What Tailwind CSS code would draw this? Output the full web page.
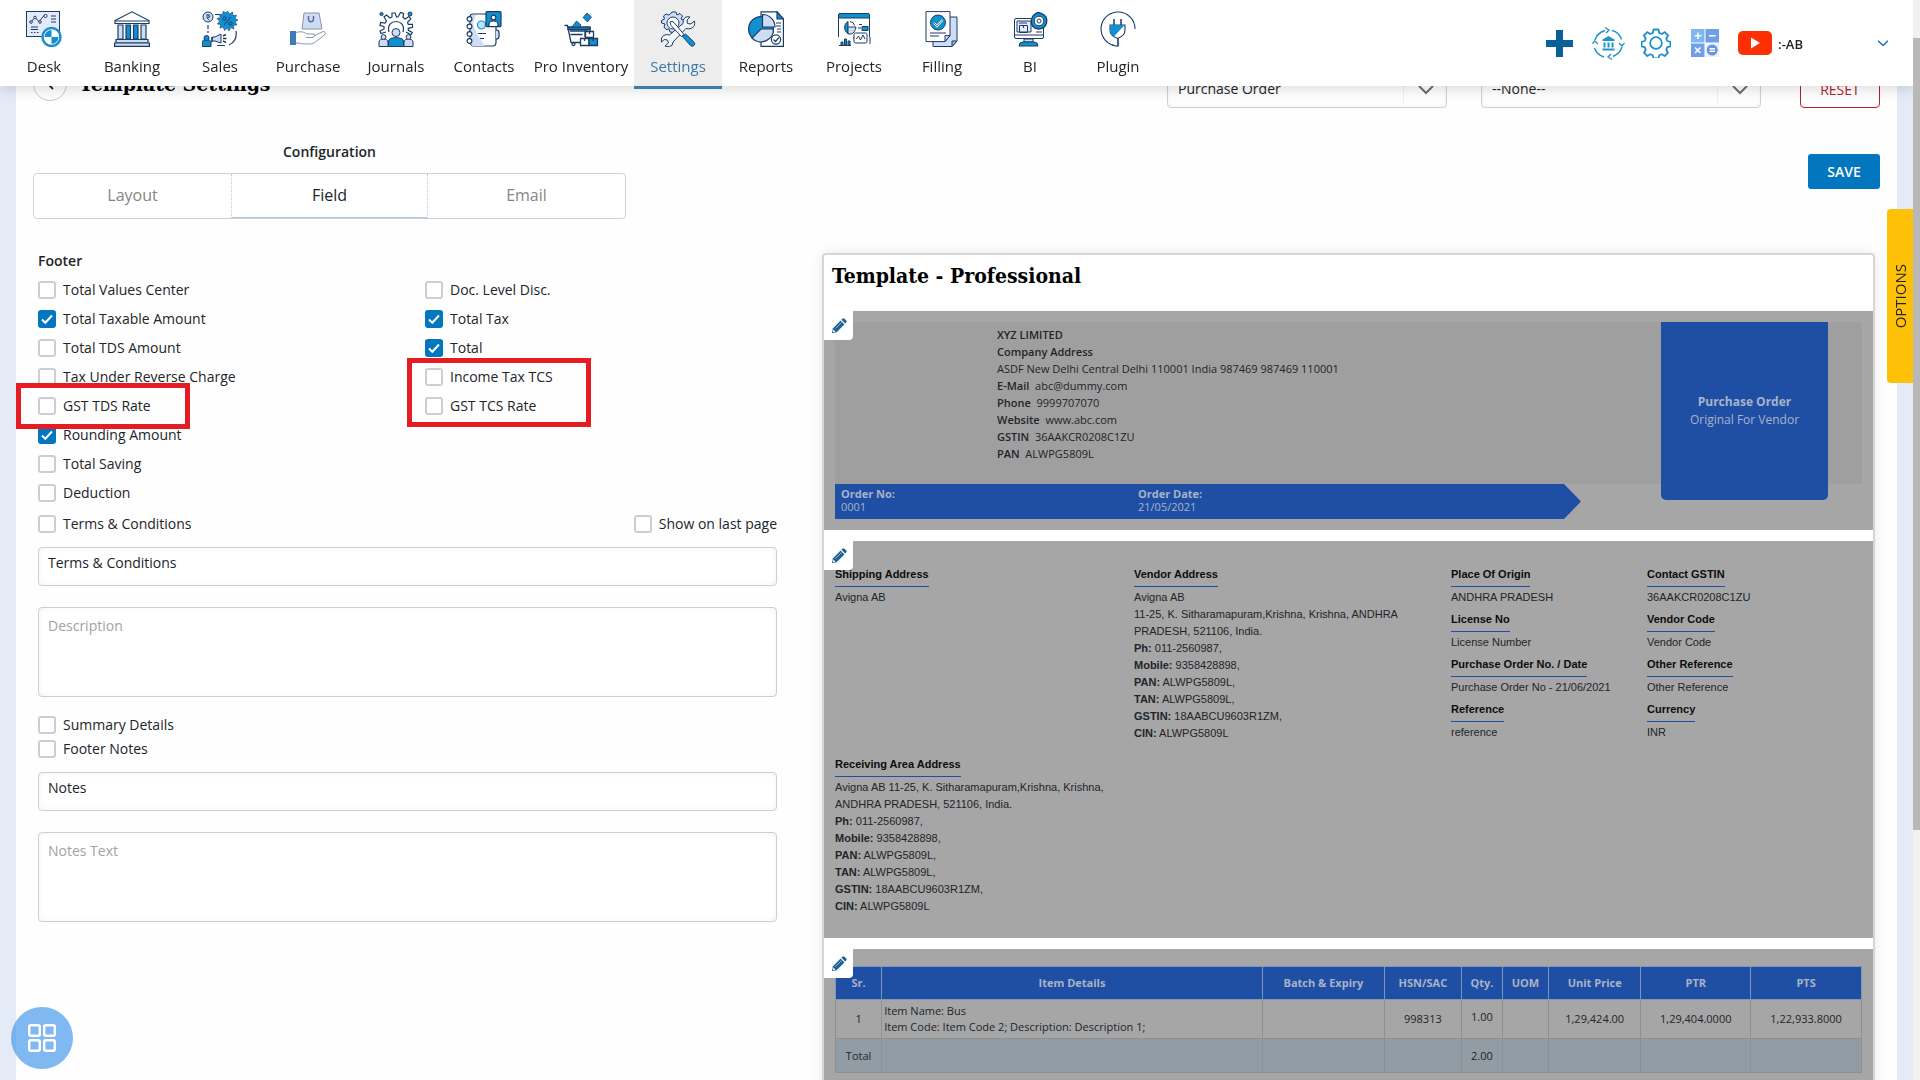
<!DOCTYPE html>
<html lang="en">
<head>
<meta charset="utf-8">
<title>Template Settings</title>
<meta name="viewport" content="width=device-width, initial-scale=1">
<script src="https://cdn.jsdelivr.net/npm/@tailwindcss/browser@4"></script>
</head>
<body class="h-screen overflow-hidden bg-[#e4eaf6] pr-[7px] font-['Open_Sans',sans-serif] text-sm text-[#212529]">

<svg class="hidden" aria-hidden="true">
  <symbol id="tick" viewBox="0 0 18 18"><path d="M4 9.5l3.3 3.2L14 5.5" fill="none" stroke="#fff" stroke-width="2"/></symbol>
  <symbol id="down" viewBox="0 0 16 10"><path d="M1 1l7 7 7-7" fill="none" stroke="currentColor" stroke-width="2"/></symbol>
  <symbol id="pencil" viewBox="0 0 16 16"><path d="M1 15l.8-4.6L9.6 2.6l3.8 3.8-7.8 7.8z" fill="#1f6296"/><path d="M10.4 1.8l1-1a1.5 1.5 0 0 1 2.100 0l1.700 1.700a1.500 1.500 0 0 1 0 2.100l-1 1z" fill="#1f6296"/><path d="M2.300 11.500l2.200 2.200-2 .4-.6-.6z" fill="#fff"/><path d="M4.500 10.500l6-6" stroke="#a9c6dc" stroke-width=".8"/></symbol>
</svg>

<!-- Top navigation -->
<header class="fixed top-0 right-[7px] left-0 z-20 flex h-[86px] items-center justify-between bg-white shadow-[0_2px_14px_rgba(0,0,0,0.16)]">
  <nav class="flex h-full text-center text-[15px] leading-5 font-medium text-[#212529]">
    <a href="#" class="flex w-22 flex-col items-center gap-[9px] pt-[11px]">
      <svg class="size-9" viewBox="0 0 36 36" fill="none" stroke="#1c3c64"><rect x=".5" y=".5" width="33" height="25" fill="#e3eafb"/><path d="M5 11l4-4.500 4 4 6-7M25 5h5M25 8h5M25 11h5M5 16h7M5 18.500h7M5 21.500h1.500M8 21.500h1.500M11 21.500h1.500"/><circle cx="5" cy="11" r="1.300" fill="#fff"/><circle cx="9" cy="6.500" r="1.300" fill="#fff"/><circle cx="14" cy="11" r="1.300" fill="#fff"/><circle cx="19.500" cy="5" r="1.600" fill="#fff"/><circle cx="25.500" cy="26" r="9" fill="#fff" stroke="#1a8fcb" stroke-width="2.500"/><path d="M25.500 19v7h-7a7 7 0 0 1 7-7zM25.500 33v-7h7a7 7 0 0 1-7 7z" fill="#1190d0" stroke="none"/></svg>
      Desk</a>
    <a href="#" class="flex w-22 flex-col items-center gap-[9px] pt-[11px]">
      <svg class="size-9" viewBox="0 0 36 36" fill="none" stroke="#1c3c64" stroke-width="1.200"><path d="M1 9.500L18 .8l17 8.700v3H1z" fill="#fff"/><path d="M1 10h34"/><path d="M4 14h5v14H4zM27 14h5v14h-5z" fill="#cfdcf5"/><path d="M12 14h4.500v14H12zM19.500 14H24v14h-4.500z" fill="#1190d0"/><path d="M2 28.500h32V32H2z" fill="#cfdcf5"/><path d="M.6 32h34.800v3.400H.6z" fill="#cfdcf5"/></svg>
      Banking</a>
    <a href="#" class="flex w-22 flex-col items-center gap-[9px] pt-[11px]">
      <svg class="size-9" viewBox="0 0 36 36" fill="none" stroke="#1c3c64"><circle cx="6" cy="6" r="5" fill="#cfdcf5"/><path d="M4 4h4M4 6h4M5 4c4 0 3 3 0 3l2.500 2.500" stroke-width=".8"/><path d="M13 3.500h4M6 14v4M6 20v2M34 20c1 6-1 11-7 14M23 34.500h-8" stroke-width="1.200"/><path d="M25.500 0l2 3 3-2 .3 3.600 3.700-.4-1.500 3.300 3 1.500-3 2 2 3-3.600.3.600 3.600-3.400-1.300L27 20l-2-3-2.600 2.600-1-3.500-3.500 1 .9-3.500-3.500-.7 2.400-2.700L15 7.500l3.500-.9L17 3.200l3.600.3.600-3.300L24 2z" fill="#1190d0" stroke-width=".6"/><path d="M22 14l7-8"/><circle cx="22.500" cy="7.500" r="1.600"/><circle cx="28.500" cy="12.500" r="1.600"/><path d="M0 35.500V31c0-3 9-3 9 0v4.500z" fill="#1190d0"/><circle cx="4.500" cy="27" r="2.500" fill="#1190d0"/><path d="M10 26h3l6-3v9l-6-2h-3z" fill="#cfdcf5"/><path d="M10 26v5M21 25l3-1.500M21 27.500h3.500M21 30l3 1.500" stroke-width="1.400"/></svg>
      Sales</a>
    <a href="#" class="flex w-22 flex-col items-center gap-[9px] pt-[11px]">
      <svg class="size-9" viewBox="0 0 36 36" fill="none" stroke="#8a93a8"><path d="M14 2h15l3 16H12z" fill="#cfdcf5"/><path d="M18.500 5v3c0 3.500 5 3.500 5 0V5" stroke="#5b6ea5" stroke-width="1.500"/><path d="M0 20h6v14H0z" fill="#3c7cbc" stroke="none"/><path d="M6 21.500c5-1.500 8-.5 11 1.500h6c3 0 2 3.500-1 3.500h-6M24 25l8-4c3-1.300 4.500 1 2.500 3L24 32c-2 1.300-8 1-12 .8-2-.1-3-1-6-.8"/></svg>
      Purchase</a>
    <a href="#" class="flex w-22 flex-col items-center gap-[9px] pt-[11px]">
      <svg class="size-9" viewBox="0 0 36 36" fill="none" stroke="#1c3c64"><circle cx="3.500" cy="3" r="1.600" fill="#1190d0"/><circle cx="32" cy="3" r="2" fill="#1190d0"/><path d="M8 21l-5 1.500-1-2.500 4-2v-2.500l-4-1 .7-3 4.300.5 1.500-2L6 6l2.500-2 3.500 3 2-1V2l3 0 1.500 4h1.500L22.500 1.500l3 1L25 6.500l2 1.500 4-2.500 1.800 2.500-3.300 3.300.8 2 4.200 0v3l-4.200 1v2l4 2.200-1.300 2.200L28 21M11 21c-4-14 18-14 14 0" stroke-width="1.200"/><path d="M1 35.500V31c0-4 9-4 9 0v4.500zM26 35.500V31c0-4 9-4 9 0v4.500z" fill="#cfdcf5"/><circle cx="5.500" cy="26" r="2.400" fill="#cfdcf5"/><circle cx="30.500" cy="26" r="2.400" fill="#cfdcf5"/><path d="M10.500 35.500V30c0-4.500 15-4.500 15 0v5.500z" fill="#1190d0"/><circle cx="18" cy="21.500" r="4" fill="#cfdcf5"/></svg>
      Journals</a>
    <a href="#" class="flex w-22 flex-col items-center gap-[9px] pt-[11px]">
      <svg class="size-9" viewBox="0 0 36 36" fill="none" stroke="#1c3c64" stroke-width="1.200"><path d="M29 3H7q-3 0-3 3v24q0 4 3 5h20q3 0 3-4V3z" fill="#fff"/><path d="M5 4h5l-3 9 4 10 8 12H7q-2 0-2-4z" fill="#cfdcf5" stroke="none"/><circle cx="3.500" cy="8" r="2.400" fill="#fff"/><circle cx="3.500" cy="15.500" r="2.400" fill="#fff"/><circle cx="3.500" cy="23" r="2.400" fill="#fff"/><circle cx="3.500" cy="30" r="2.400" fill="#fff"/><circle cx="15.500" cy="14" r="4" fill="#bfe0fa" stroke="#1190d0"/><path d="M12 22.500h8M14 27.500h4"/><path d="M30 19q3 0 3 2.500v4q0 2.500-3 2.500" fill="#cfdcf5"/><rect x="20" y=".6" width="15" height="15" rx="1" fill="#1190d0"/><circle cx="27.500" cy="6.500" r="2.300" fill="#fff"/><path d="M23 15.500V13c0-4 9-4 9 0v2.500z" fill="#fff"/></svg>
      Contacts</a>
    <a href="#" class="flex w-[106px] flex-col items-center gap-[9px] pt-[11px] whitespace-nowrap">
      <svg class="size-9" viewBox="0 0 36 36" fill="none" stroke="#1c3c64" stroke-width="1.300"><path d="M1.500 14.500h3l3.500 17h9M7 20h18M7.500 23.500h12M27 16v4M22 20v6"/><path d="M5 16h22v2.500H5z" fill="#1190d0"/><path d="M9 16l4.500-6 4.500 4-1 2z" fill="#1190d0" stroke-width=".8"/><path d="M24 2l4.500 4-4 5-4.500-4.500z" fill="#1190d0" stroke-width=".8"/><circle cx="10.500" cy="33" r="1.500"/><path d="M22.500 20.500h8v6h-8zM17.500 27.500h8.500v7h-8.500z" fill="#fff"/><path d="M26 27.500h8.500v7H26z" fill="#1190d0"/><path d="M26.500 21v2M21.500 28v2M30 28v2"/></svg>
      Pro Inventory</a>
    <a href="#" class="flex h-[89px] w-22 flex-col items-center gap-[9px] border-b-3 border-[#3c7ba9] bg-[#ededed] pt-[11px] text-[#3c78ab]">
      <svg class="size-9" viewBox="0 0 36 36" fill="none" stroke="#1c3c64"><path d="M12 1h4l1 3 3-1.500 2.500 2.500-1.500 3 3 1.500v3l-3 2 .5 3-3 2-3-1-2 3-3.500-.5-1-3-3 .5-2-2.500 1-3-3.500-1V9.500l3-1.500L3.500 5 6 3l3 1.200z" fill="#cfdcf5"/><circle cx="13" cy="12" r="6" fill="#fff"/><path d="M25 6.500q3-1.500 5-.5l-3 3 .5 3.500 3.500.5 3.500-3q1 5-2.500 7-3 1.500-6 .5L13 31q0 4-3.500 4.500-3 .5-4.500-.5l3.500-3-1-3-3.200-.5-2.800 2.500q-1-4.500 2-6.500 3-1.700 6-.5L23 12.500q-.5-4 2-6z" fill="#f4f6fb"/><path d="M10 11q2-1.500 4 .5l10 12-2.500 2L11 14.500z" fill="#fff"/><path d="M22.500 25.500l3-2.500 8 7.500c3 3-.5 6-3 4z" fill="#1190d0"/></svg>
      Settings</a>
    <a href="#" class="flex w-22 flex-col items-center gap-[9px] pt-[11px]">
      <svg class="size-9" viewBox="0 0 36 36" fill="none" stroke="#1c3c64" stroke-width="1.200"><path d="M13 .8h16L35.400 8v27.400H13z" fill="#fff"/><path d="M29 .8V8h6.400z" fill="#1190d0"/><circle cx="13" cy="18" r="12.400" fill="#1190d0"/><path d="M13 18h12.400A12.400 12.400 0 0 1 4 27z" fill="#cfdcf5"/><path d="M14.500 3.500A12.400 12.400 0 0 1 27 16H14.500z" fill="#cfdcf5"/><path d="M28 12h5M28 15h5M29 18h4M29 21h4"/><circle cx="28" cy="28.500" r="4.600" fill="#fff"/><path d="M25.500 28.500l2 2 3.500-4"/></svg>
      Reports</a>
    <a href="#" class="flex w-22 flex-col items-center gap-[9px] pt-[11px]">
      <svg class="size-9" viewBox="0 0 36 36" fill="none" stroke="#1c3c64"><path d="M2.500 26V4q0-1.500 2-1.500h27q2 0 2 1.500v22" fill="#fff"/><path d="M2.500 7V4q0-1.500 2-1.500h27q2 0 2 1.500v3z" fill="#1190d0"/><path d="M12 10.500v12a7 7 0 0 1 0-12z" fill="#1190d0"/><path d="M12 16h8q-1 6-5 7h-3z" fill="#cfdcf5"/><path d="M14 10.500q4 .5 4.500 4M23 13.500h3M22 17h3M17 27h2" /><path d="M26 15.500h6v4h-6z" fill="#1190d0"/><rect x="18" y="22" width="13" height="10" rx="1.500" fill="#fff"/><path d="M20 28l2.500-3 2 4 2.500-5 2 4M34 26v7M3 34.500h12"/><path d="M5 31h2v3H5zM8.500 28h2v6h-2zM12 30h2v4h-2z" fill="#1190d0"/></svg>
      Projects</a>
    <a href="#" class="flex w-22 flex-col items-center gap-[9px] pt-[11px]">
      <svg class="size-9" viewBox="0 0 36 36" fill="none" stroke="#1c3c64"><path d="M9 6h24v24l-5 5.500H9z" fill="#cfdcf5"/><path d="M28 35.500V30h5z" fill="#9fb6e0"/><path d="M2 .6h24v24l-5 6H2z" fill="#fff"/><path d="M21 30.600v-6h5z" fill="#cfdcf5"/><path d="M6 22h16M6 25h9"/><circle cx="14" cy="11.500" r="7.500" fill="#1190d0"/><path d="M10 12l3 3 5.500-6" stroke="#fff" stroke-width="2"/><path d="M10 12l3 3 5.500-6" stroke-width=".7"/></svg>
      Filling</a>
    <a href="#" class="flex w-22 flex-col items-center gap-[9px] pt-[11px]">
      <svg class="size-9" viewBox="0 0 36 36" fill="none" stroke="#1c3c64"><rect x="2.500" y="7.500" width="29" height="20" rx="1.500" fill="#fff"/><path d="M3 24h28M3 27.500h28" /><path d="M5 10h14v11H5z" fill="#e3eafb"/><path d="M7 12h8M7.500 14.500h8v7h-8zM11.500 14.500v2.500M24 21h6"/><path d="M12 28h9v3h-9z" fill="#cfdcf5"/><path d="M7 35q0-4 4-4h11q4 0 4 4z" fill="#1190d0"/><path d="M26 1.500l3 .8 2.500 1.200 2.500 2.300.8 3-.3 3.500-1.500 3-3 2.200-3.500.7-3.500-1-2.500-2.200-1.300-3.200.3-3.500L21 5l2.300-2.300z" fill="#1190d0" stroke-width="1.300"/><circle cx="27" cy="10" r="4.800" fill="#fff"/><circle cx="27" cy="10" r="2"/></svg>
      BI</a>
    <a href="#" class="flex w-22 flex-col items-center gap-[9px] pt-[11px]">
      <svg class="size-9" viewBox="0 0 36 36" fill="none" stroke="#1c3c64" stroke-width="1.100"><path d="M35 18A17 17 0 1 0 14 34.500M18 35v-9"/><path d="M10 14h15v5q0 6-7.500 8.500Q10 25 10 19z" fill="#fff"/><path d="M10 14h14.500L14 25.500Q10 23 10 19z" fill="#1190d0" stroke="none"/><path d="M14 8v6M21 8v6" stroke-width="1.500"/><path d="M18 27.500V35q-3 .5-6-1.500"/></svg>
      Plugin</a>
  </nav>
  <div class="flex items-center pr-6">
    <button aria-label="Add" class="mr-[19px]"><svg class="size-[27px]" viewBox="0 0 27 27"><path d="M10 0h7v10h10v7H17v10h-7V17H0v-7h10z" fill="#0a6099"/></svg></button>
    <button aria-label="Bank sync" class="mr-4"><svg class="size-[33px]" viewBox="0 0 33 33" fill="none" stroke="#2094c9" stroke-width="1.500"><path d="M3 13Q5 6 13 3.500M20 3.500q7 1.500 9.500 9M30 20q-2 6.500-9 9.500M12 30q-7-2-9.500-9"/><path d="M13 .5l4 2.500-3 3M32.500 16L30 19l-3-3M20 32.500l-4-2.500 3-3M.5 17L2.500 14l3.500 3" stroke-width="1.300"/><path d="M10.500 12.500L16.500 9l6 3.500v1.500h-12z" fill="#2094c9" stroke="none"/><path d="M12.500 15.500v5M16.500 15.500v5M20.500 15.500v5M10.500 22.500h12" stroke-width="2"/></svg></button>
    <button aria-label="Preferences" class="mr-5"><svg class="size-[30px]" viewBox="0 0 30 30" fill="none" stroke="#1f8fc9" stroke-width="1.800"><circle cx="15" cy="15" r="5.800"/><path d="M12.600 1.500h4.800l.8 3.400 2.600 1.100 3-1.900 3.300 3.400-1.800 3 1 2.500 3.200.8v4.500l-3.200.9-1 2.500 1.700 3-3.300 3.300-3-1.800-2.500 1.100-.8 3.200h-4.800l-.8-3.200-2.500-1.100-3 1.800-3.300-3.300 1.700-3-1-2.500-3.200-.9v-4.500l3.200-.8 1-2.500-1.800-3 3.300-3.400 3 1.900 2.600-1.100z" stroke-linejoin="round"/></svg></button>
    <button aria-label="Calculator" class="mr-[19px]"><svg class="size-7" viewBox="0 0 28 28"><path d="M0 0h13.500v13.500H0z" fill="#7db9f0"/><path d="M14.500 0H28v13.500H14.500z" fill="#6f9fe8"/><path d="M0 14.500h13.500V28H0z" fill="#6f9fe8"/><path d="M14.500 14.500H28V28H14.500z" fill="#e9f1fd"/><circle cx="21.200" cy="21" r="5.500" fill="#6a93e0"/><path d="M7 3.500v6.500M3.700 6.800h6.600M18 6.800h6.500M4 18.500l5.500 5.500M9.500 18.500L4 24M18.500 19.800h5.500M18.500 22.300h5.500" stroke="#fff" stroke-width="1.500"/></svg></button>
    <button aria-label="Videos" class="mr-[6px]"><svg class="h-6 w-[34px]" viewBox="0 0 34 24"><rect width="34" height="24" rx="5" fill="#fd3003"/><path d="M13 6.500l9 5.500-9 5.500z" fill="#fff"/></svg></button>
    <span class="mr-[74px] pt-[3px] text-[13px] font-semibold">:-AB</span>
    <button aria-label="Account menu" class="text-[#1a6fae]"><svg class="h-[7px] w-3" viewBox="0 0 16 10"><use href="#down"/></svg></button>
  </div>
</header>

<main class="mx-4 min-h-screen bg-[#fefefe] px-[17px] pt-[67px]">

  <div class="flex items-start justify-between">
    <div class="flex items-center gap-3">
      <a href="#" aria-label="Back" class="grid size-[34px] place-items-center rounded-full border border-[#c9c9c9]"><svg class="h-3 w-2" viewBox="0 0 8 12"><path d="M7 1L2 6l5 5" fill="none" stroke="#222" stroke-width="1.800"/></svg></a>
      <h1 class="font-['DejaVu_Serif_Condensed','DejaVu_Serif',serif] text-[21px] leading-8 font-bold text-black">Template Settings</h1>
    </div>
    <div class="flex items-end">
      <div class="mr-[34px] grid w-[280px]">
        <select aria-label="Document type" class="col-start-1 row-start-1 h-[41px] appearance-none rounded border border-[#cdcfd2] bg-white pt-[2px] pl-[10px] shadow-[inset_0_0_6px_rgba(0,0,0,0.05)]"><option>Purchase Order</option></select>
        <span class="pointer-events-none col-start-1 row-start-1 my-1 flex w-11 items-center justify-center justify-self-end border-l border-[#f0f0f0] pt-1 text-[#6b7075]"><svg class="h-[10px] w-4"><use href="#down"/></svg></span>
      </div>
      <div class="mr-[39px] grid w-[280px]">
        <select aria-label="Parent template" class="col-start-1 row-start-1 h-[41px] appearance-none rounded border border-[#cdcfd2] bg-white pt-[2px] pl-[10px] shadow-[inset_0_0_6px_rgba(0,0,0,0.05)]"><option>--None--</option></select>
        <span class="pointer-events-none col-start-1 row-start-1 my-1 flex w-11 items-center justify-center justify-self-end border-l border-[#f0f0f0] pt-1 text-[#6b7075]"><svg class="h-[10px] w-4"><use href="#down"/></svg></span>
      </div>
      <button class="h-9 w-[80px] rounded border border-[#b5202b] bg-white font-medium text-[#b5202b]">RESET</button>
    </div>
  </div>

  <div class="mt-[34px] flex items-start justify-between">
    <div class="w-[593px] text-center">
      <h2 class="leading-5 font-semibold">Configuration</h2>
      <div class="mt-[11px] grid h-[46px] grid-cols-3 rounded border border-[#cfd2d5] bg-white text-base text-[#868686]">
        <button class="pb-[2px]">Layout</button>
        <button class="border-x border-b border-dotted border-[#c6cbd0] border-b-[#a9cbdd] pb-px text-[#212529] [border-bottom-style:solid]">Field</button>
        <button class="pb-[2px]">Email</button>
      </div>
    </div>
    <button class="mt-3 h-[35px] w-[72px] rounded-[3px] bg-[#0277bf] font-semibold text-white">SAVE</button>
  </div>

  <div class="grid grid-cols-[739fr_1053fr] gap-[45px] px-[5px]">

    <!-- Footer field options -->
    <form class="pt-8">
      <h3 class="leading-5 font-semibold">Footer</h3>
      <div class="relative mt-1 grid grid-cols-[387fr_352fr] [&_label]:flex [&_label]:h-[29px] [&_label]:items-center [&_label]:gap-[7px]">
        <div>
          <label><span class="grid"><input type="checkbox" class="col-start-1 row-start-1 size-[18px] appearance-none rounded-[3px] border-2 border-[#cbced2] bg-white checked:border-[#0277bf] checked:bg-[#0277bf]"></span>Total Values Center</label>
          <label><span class="grid"><input type="checkbox" checked class="col-start-1 row-start-1 size-[18px] appearance-none rounded-[3px] border-2 border-[#cbced2] bg-white checked:border-[#0277bf] checked:bg-[#0277bf]"><svg class="pointer-events-none col-start-1 row-start-1 size-[18px]"><use href="#tick"/></svg></span>Total Taxable Amount</label>
          <label><span class="grid"><input type="checkbox" class="col-start-1 row-start-1 size-[18px] appearance-none rounded-[3px] border-2 border-[#cbced2] bg-white checked:border-[#0277bf] checked:bg-[#0277bf]"></span>Total TDS Amount</label>
          <label><span class="grid"><input type="checkbox" class="col-start-1 row-start-1 size-[18px] appearance-none rounded-[3px] border-2 border-[#cbced2] bg-white checked:border-[#0277bf] checked:bg-[#0277bf]"></span>Tax Under Reverse Charge</label>
          <label><span class="grid"><input type="checkbox" class="col-start-1 row-start-1 size-[18px] appearance-none rounded-[3px] border-2 border-[#cbced2] bg-white checked:border-[#0277bf] checked:bg-[#0277bf]"></span>GST TDS Rate</label>
          <label><span class="grid"><input type="checkbox" checked class="col-start-1 row-start-1 size-[18px] appearance-none rounded-[3px] border-2 border-[#cbced2] bg-white checked:border-[#0277bf] checked:bg-[#0277bf]"><svg class="pointer-events-none col-start-1 row-start-1 size-[18px]"><use href="#tick"/></svg></span>Rounding Amount</label>
          <label><span class="grid"><input type="checkbox" class="col-start-1 row-start-1 size-[18px] appearance-none rounded-[3px] border-2 border-[#cbced2] bg-white checked:border-[#0277bf] checked:bg-[#0277bf]"></span>Total Saving</label>
          <label><span class="grid"><input type="checkbox" class="col-start-1 row-start-1 size-[18px] appearance-none rounded-[3px] border-2 border-[#cbced2] bg-white checked:border-[#0277bf] checked:bg-[#0277bf]"></span>Deduction</label>
        </div>
        <div>
          <label><span class="grid"><input type="checkbox" class="col-start-1 row-start-1 size-[18px] appearance-none rounded-[3px] border-2 border-[#cbced2] bg-white checked:border-[#0277bf] checked:bg-[#0277bf]"></span>Doc. Level Disc.</label>
          <label><span class="grid"><input type="checkbox" checked class="col-start-1 row-start-1 size-[18px] appearance-none rounded-[3px] border-2 border-[#cbced2] bg-white checked:border-[#0277bf] checked:bg-[#0277bf]"><svg class="pointer-events-none col-start-1 row-start-1 size-[18px]"><use href="#tick"/></svg></span>Total Tax</label>
          <label><span class="grid"><input type="checkbox" checked class="col-start-1 row-start-1 size-[18px] appearance-none rounded-[3px] border-2 border-[#cbced2] bg-white checked:border-[#0277bf] checked:bg-[#0277bf]"><svg class="pointer-events-none col-start-1 row-start-1 size-[18px]"><use href="#tick"/></svg></span>Total</label>
          <label><span class="grid"><input type="checkbox" class="col-start-1 row-start-1 size-[18px] appearance-none rounded-[3px] border-2 border-[#cbced2] bg-white checked:border-[#0277bf] checked:bg-[#0277bf]"></span>Income Tax TCS</label>
          <label><span class="grid"><input type="checkbox" class="col-start-1 row-start-1 size-[18px] appearance-none rounded-[3px] border-2 border-[#cbced2] bg-white checked:border-[#0277bf] checked:bg-[#0277bf]"></span>GST TCS Rate</label>
        </div>
        <!-- highlight frames around the new tax rate fields -->
        <div class="pointer-events-none absolute top-[108px] -left-[22px] h-[46px] w-[174px] border-5 border-[#e61c24]"></div>
        <div class="pointer-events-none absolute top-[83px] left-[369px] h-[69px] w-[184px] border-5 border-[#e61c24]"></div>
      </div>

      <div class="mt-[2px] flex h-[29px] items-center justify-between">
        <label class="flex items-center gap-[7px]"><input type="checkbox" class="size-[18px] appearance-none rounded-[3px] border-2 border-[#cbced2] bg-white">Terms &amp; Conditions</label>
        <label class="flex items-center gap-[7px]"><input type="checkbox" class="size-[18px] appearance-none rounded-[3px] border-2 border-[#cbced2] bg-white">Show on last page</label>
      </div>
      <input aria-label="Terms heading" value="Terms &amp; Conditions" class="mt-[9px] block h-[39px] w-full rounded border border-[#cdcfd2] bg-white px-[9px] pb-2 shadow-[inset_0_0_6px_rgba(0,0,0,0.05)]">
      <textarea aria-label="Description" placeholder="Description" class="mt-[21px] block h-[90px] w-full resize-none rounded border border-[#cdcfd2] bg-white px-[9px] py-2 shadow-[inset_0_0_6px_rgba(0,0,0,0.05)] placeholder:text-[#a2a2a2]"></textarea>
      <div class="mt-4 flex flex-col">
        <label class="flex h-6 items-center gap-[7px]"><input type="checkbox" class="size-[18px] appearance-none rounded-[3px] border-2 border-[#cbced2] bg-white">Summary Details</label>
        <label class="flex h-6 items-center gap-[7px]"><input type="checkbox" class="size-[18px] appearance-none rounded-[3px] border-2 border-[#cbced2] bg-white">Footer Notes</label>
      </div>
      <input aria-label="Notes heading" value="Notes" class="mt-[11px] block h-[39px] w-full rounded border border-[#cdcfd2] bg-white px-[9px] pb-2 shadow-[inset_0_0_6px_rgba(0,0,0,0.05)]">
      <textarea aria-label="Notes text" placeholder="Notes Text" class="mt-[21px] block h-[90px] w-full resize-none rounded border border-[#cdcfd2] bg-white px-[9px] py-2 shadow-[inset_0_0_6px_rgba(0,0,0,0.05)] placeholder:text-[#a2a2a2]"></textarea>
    </form>

    <!-- Template preview -->
    <section class="mt-[34px] rounded-t border-2 border-b-0 border-[#d6d6d6] bg-white text-[11px] shadow-[0_0_12px_rgba(0,0,0,0.09)]">
      <h2 class="px-2 pt-[5px] pb-[19px] font-['DejaVu_Serif_Condensed','DejaVu_Serif',serif] text-[21px] leading-8 font-bold text-black">Template - Professional</h2>

      <div class="relative h-[219px] bg-[#a6a6a6] px-[11px] pt-[11px]">
        <button aria-label="Edit header" class="absolute top-0 left-0 grid h-[29px] w-[29px] place-items-center rounded-br bg-white"><svg class="size-4"><use href="#pencil"/></svg></button>
        <div class="flex h-[162px] justify-between bg-[#9f9f9f] pr-[34px] pl-[162px]">
          <div class="pt-1 leading-[17px]">
            <p class="font-semibold">XYZ LIMITED</p>
            <p class="font-semibold">Company Address</p>
            <p>ASDF New Delhi Central Delhi 110001 India 987469 987469 110001</p>
            <p><b class="font-semibold">E-Mail</b>&nbsp; abc@dummy.com</p>
            <p><b class="font-semibold">Phone</b>&nbsp; 9999707070</p>
            <p><b class="font-semibold">Website</b>&nbsp; www.abc.com</p>
            <p><b class="font-semibold">GSTIN</b>&nbsp; 36AAKCR0208C1ZU</p>
            <p><b class="font-semibold">PAN</b>&nbsp; ALWPG5809L</p>
          </div>
          <div class="flex h-[178px] w-[167px] flex-col items-center justify-center rounded-b-[5px] bg-[#1f4fa5] text-xs leading-[18px] text-[#a9b3c6]">
            <strong>Purchase Order</strong>
            <span>Original For Vendor</span>
          </div>
        </div>
        <div class="grid h-[35px] w-[746px] grid-cols-[297px_1fr] bg-[#1f4fa5] px-[6px] pt-[3px] leading-[13px] text-[#a9b3c6] [clip-path:polygon(0_0,calc(100%-17px)_0,100%_50%,calc(100%-17px)_100%,0_100%)]">
          <p><b>Order No:</b><br>0001</p>
          <p><b>Order Date:</b><br>21/05/2021</p>
        </div>
      </div>

      <div class="relative mt-[11px] h-[397px] bg-[#a6a6a6] px-[11px] pt-[25px] font-['Liberation_Sans',sans-serif] leading-[17px] [&_h4]:mb-[2px] [&_h4]:w-fit [&_h4]:border-b [&_h4]:border-[#1f4fa5] [&_h4]:pb-[3px] [&_h4]:font-bold [&_h4]:text-[#0d0d0d]">
        <div class="grid grid-cols-[299fr_317fr_196fr_215fr]">
          <div><h4>Shipping Address</h4><p>Avigna AB</p></div>
          <div>
            <h4>Vendor Address</h4>
            <p>Avigna AB<br>11-25, K. Sitharamapuram,Krishna, Krishna, ANDHRA<br>PRADESH, 521106, India.<br><b>Ph:</b> 011-2560987,<br><b>Mobile:</b> 9358428898,<br><b>PAN:</b> ALWPG5809L,<br><b>TAN:</b> ALWPG5809L,<br><b>GSTIN:</b> 18AABCU9603R1ZM,<br><b>CIN:</b> ALWPG5809L</p>
          </div>
          <div class="flex flex-col gap-[5px]">
            <div><h4>Place Of Origin</h4><p>ANDHRA PRADESH</p></div>
            <div><h4>License No</h4><p>License Number</p></div>
            <div><h4>Purchase Order No. / Date</h4><p>Purchase Order No - 21/06/2021</p></div>
            <div><h4>Reference</h4><p>reference</p></div>
          </div>
          <div class="flex flex-col gap-[5px]">
            <div><h4>Contact GSTIN</h4><p>36AAKCR0208C1ZU</p></div>
            <div><h4>Vendor Code</h4><p>Vendor Code</p></div>
            <div><h4>Other Reference</h4><p>Other Reference</p></div>
            <div><h4>Currency</h4><p>INR</p></div>
          </div>
        </div>
        <div class="mt-[14px]">
          <h4>Receiving Area Address</h4>
          <p>Avigna AB 11-25, K. Sitharamapuram,Krishna, Krishna,<br>ANDHRA PRADESH, 521106, India.<br><b>Ph:</b> 011-2560987,<br><b>Mobile:</b> 9358428898,<br><b>PAN:</b> ALWPG5809L,<br><b>TAN:</b> ALWPG5809L,<br><b>GSTIN:</b> 18AABCU9603R1ZM,<br><b>CIN:</b> ALWPG5809L</p>
        </div>
        <button aria-label="Edit addresses" class="absolute top-0 left-0 grid h-[29px] w-[29px] place-items-center rounded-br bg-white"><svg class="size-4"><use href="#pencil"/></svg></button>
      </div>

      <div class="relative mt-[11px] bg-[#a6a6a6] px-[11px] pt-[17px] pb-4">
        <table class="w-full table-fixed border-collapse text-center leading-4 [&_td]:border [&_td]:border-[#8d9193] [&_th]:border [&_th]:border-[#7f95bd] [&_th]:bg-[#1f4fa5] [&_th]:text-[#a9b3c6]">
          <colgroup><col class="w-[4.5%]"><col class="w-[37.1%]"><col class="w-[11.9%]"><col class="w-[7.5%]"><col class="w-[4%]"><col class="w-[4.5%]"><col class="w-[9%]"><col class="w-[10.7%]"><col class="w-[10.8%]"></colgroup>
          <thead><tr class="h-[33px]"><th>Sr.</th><th>Item Details</th><th>Batch &amp; Expiry</th><th>HSN/SAC</th><th>Qty.</th><th>UOM</th><th>Unit Price</th><th>PTR</th><th>PTS</th></tr></thead>
          <tbody>
            <tr class="h-[39px]"><td>1</td><td class="pl-[2px] text-left">Item Name: Bus<br>Item Code: Item Code 2; Description: Description 1;</td><td></td><td>998313</td><td class="pb-1">1.00</td><td></td><td>1,29,424.00</td><td>1,29,404.0000</td><td>1,22,933.8000</td></tr>
            <tr class="h-[34px] bg-[#919ca4] font-medium"><td>Total</td><td></td><td></td><td></td><td>2.00</td><td></td><td></td><td></td><td></td></tr>
          </tbody>
        </table>
        <button aria-label="Edit items" class="absolute top-0 left-0 grid h-[29px] w-[29px] place-items-center rounded-br bg-white"><svg class="size-4"><use href="#pencil"/></svg></button>
      </div>
    </section>
  </div>
</main>

<button class="fixed top-[209px] right-[7px] z-10 h-[174px] w-[26px] rounded-l bg-[#ffc107] pt-[6px] text-center"><span class="inline-block rotate-180 text-[15px] leading-6 [writing-mode:vertical-rl]">OPTIONS</span></button>

<button aria-label="Quick launch" class="fixed bottom-[11px] left-[11px] z-10 grid size-[62px] place-items-center rounded-full bg-[#2b8ae8]/60"><svg class="size-7" viewBox="0 0 28 28" fill="none" stroke="#fff" stroke-width="2.400"><rect x="1.200" y="1.200" width="10.600" height="10.600" rx="1.500"/><rect x="16.200" y="1.200" width="10.600" height="10.600" rx="1.500"/><rect x="1.200" y="16.200" width="10.600" height="10.600" rx="1.500"/><rect x="16.200" y="16.200" width="10.600" height="10.600" rx="1.500"/></svg></button>

<!-- Scroll track -->
<div class="fixed inset-y-0 right-0 z-30 w-[7px] bg-[#f1f1f1] pt-[38px]"><div class="h-[76%] bg-[#b8b8b8]"></div></div>

</body>
</html>
